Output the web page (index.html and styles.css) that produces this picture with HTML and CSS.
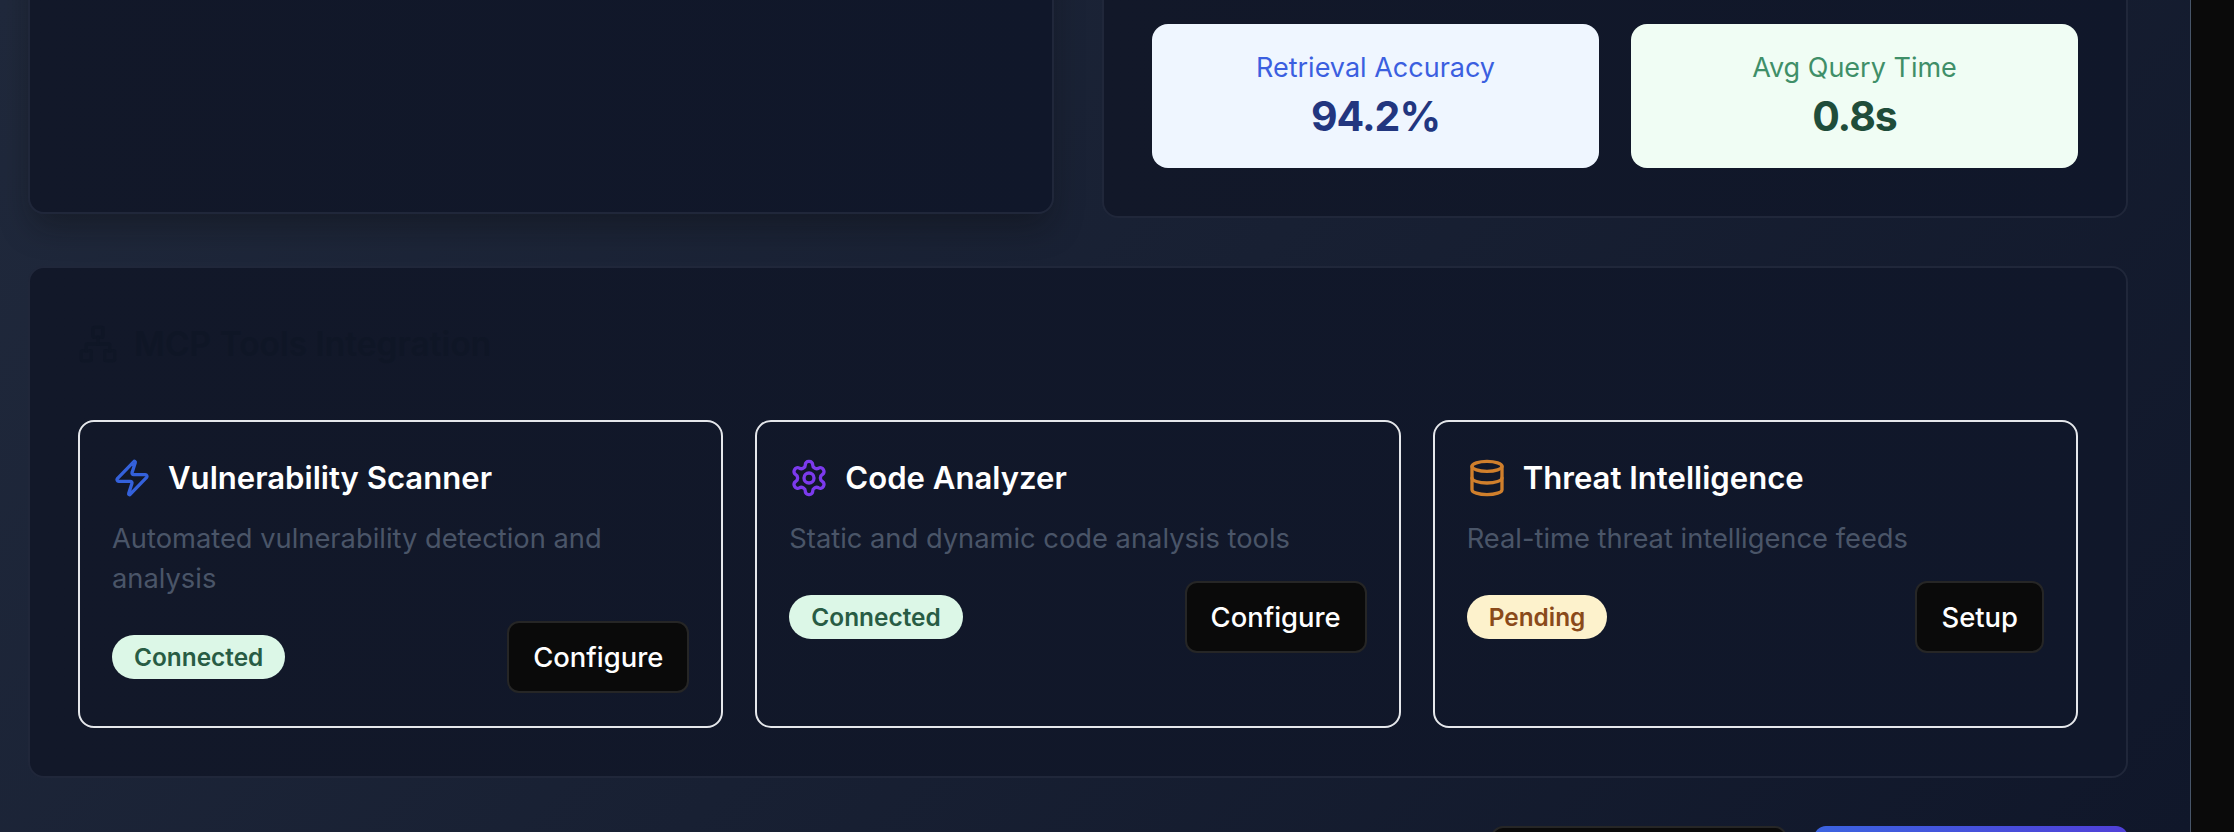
FILE: index.html
```html
<!DOCTYPE html>
<html lang="en">
<head>
<meta charset="utf-8">
<title>MCP Tools Integration</title>
<link rel="stylesheet" href="styles.css">
</head>
<body>
<div class="app">
  <main class="main">
    <div class="top-row">
      <section class="panel panel-left"></section>
      <section class="panel panel-right">
        <div class="metrics">
          <div class="metric metric-blue">
            <div class="metric-label">Retrieval Accuracy</div>
            <div class="metric-value">94.2%</div>
          </div>
          <div class="metric metric-green">
            <div class="metric-label">Avg Query Time</div>
            <div class="metric-value">0.8s</div>
          </div>
        </div>
      </section>
    </div>

    <section class="panel panel-tools">
      <h2 class="section-title">
        <svg class="icon" viewBox="0 0 24 24"><rect x="16" y="16" width="6" height="6" rx="1"/><rect x="2" y="16" width="6" height="6" rx="1"/><rect x="9" y="2" width="6" height="6" rx="1"/><path d="M5 16v-3a1 1 0 0 1 1-1h12a1 1 0 0 1 1 1v3"/><path d="M12 12V8"/></svg>
        MCP Tools Integration
      </h2>
      <div class="tools">
        <article class="tool">
          <div class="tool-head">
            <svg class="icon icon-blue" viewBox="0 0 24 24"><path d="M4 14a1 1 0 0 1-.78-1.63l9.9-10.2a.5.5 0 0 1 .86.46l-1.92 6.02A1 1 0 0 0 13 10h7a1 1 0 0 1 .78 1.63l-9.9 10.2a.5.5 0 0 1-.86-.46l1.92-6.02A1 1 0 0 0 11 14z"/></svg>
            <h3 class="tool-name">Vulnerability Scanner</h3>
          </div>
          <p class="tool-desc">Automated vulnerability detection and analysis</p>
          <div class="tool-foot">
            <span class="pill pill-green">Connected</span>
            <button class="btn">Configure</button>
          </div>
        </article>
        <article class="tool">
          <div class="tool-head">
            <svg class="icon icon-purple" viewBox="0 0 24 24"><path d="M12.22 2h-.44a2 2 0 0 0-2 2v.18a2 2 0 0 1-1 1.73l-.43.25a2 2 0 0 1-2 0l-.15-.08a2 2 0 0 0-2.73.73l-.22.38a2 2 0 0 0 .73 2.73l.15.1a2 2 0 0 1 1 1.72v.51a2 2 0 0 1-1 1.74l-.15.09a2 2 0 0 0-.73 2.73l.22.38a2 2 0 0 0 2.73.73l.15-.08a2 2 0 0 1 2 0l.43.25a2 2 0 0 1 1 1.73V20a2 2 0 0 0 2 2h.44a2 2 0 0 0 2-2v-.18a2 2 0 0 1 1-1.73l.43-.25a2 2 0 0 1 2 0l.15.08a2 2 0 0 0 2.73-.73l.22-.39a2 2 0 0 0-.73-2.73l-.15-.08a2 2 0 0 1-1-1.74v-.5a2 2 0 0 1 1-1.74l.15-.09a2 2 0 0 0 .73-2.73l-.22-.38a2 2 0 0 0-2.73-.73l-.15.08a2 2 0 0 1-2 0l-.43-.25a2 2 0 0 1-1-1.73V4a2 2 0 0 0-2-2z"/><circle cx="12" cy="12" r="3"/></svg>
            <h3 class="tool-name">Code Analyzer</h3>
          </div>
          <p class="tool-desc">Static and dynamic code analysis tools</p>
          <div class="tool-foot">
            <span class="pill pill-green">Connected</span>
            <button class="btn">Configure</button>
          </div>
        </article>
        <article class="tool">
          <div class="tool-head">
            <svg class="icon icon-orange" viewBox="0 0 24 24"><ellipse cx="12" cy="5" rx="9" ry="3"/><path d="M3 5v14a9 3 0 0 0 18 0V5"/><path d="M3 12a9 3 0 0 0 18 0"/></svg>
            <h3 class="tool-name">Threat Intelligence</h3>
          </div>
          <p class="tool-desc">Real-time threat intelligence feeds</p>
          <div class="tool-foot">
            <span class="pill pill-amber">Pending</span>
            <button class="btn">Setup</button>
          </div>
        </article>
      </div>
    </section>

    <div class="actions">
      <button class="action action-dark" aria-label="Secondary action"></button>
      <button class="action action-primary" aria-label="Primary action"></button>
    </div>
  </main>
</div>
</body>
</html>
```

FILE: styles.css
```css
* { box-sizing: border-box; }

html, body {
  margin: 0;
  height: 832px;
  overflow: hidden;
  background: #0a0a0a;
  font-family: Inter, "Liberation Sans", sans-serif;
}

.app {
  display: flex;
  height: 832px;
  overflow: hidden;
}

.main {
  flex: 0 0 2191px;
  height: 832px;
  padding: 0 62px 0 28px;
  border-right: 1px solid #475569;
  background: linear-gradient(135deg, #20293c 0%, #10172a 100%);
  display: flex;
  flex-direction: column;
  gap: 48px;
}

.top-row {
  margin-top: -60px;
  display: grid;
  grid-template-columns: 1fr 1fr;
  column-gap: 48px;
  align-items: start;
}

.panel {
  border: 2px solid #20273a;
  border-radius: 16px;
  background: linear-gradient(90deg, #121829 0%, #10172a 100%);
}

.panel-left {
  height: 274px;
  box-shadow: 0 16px 32px -4px rgba(12, 10, 10, 0.36);
}

.panel-right {
  padding: 82px 48px 48px;
}

.metrics {
  display: grid;
  grid-template-columns: 1fr 1fr;
  column-gap: 32px;
}

.metric {
  height: 144px;
  padding: 24px;
  border-radius: 16px;
  text-align: center;
}

.metric-label {
  font-size: 27px;
  line-height: 40px;
}

.metric-value {
  font-size: 41px;
  font-weight: 700;
  line-height: 56px;
  letter-spacing: -1px;
}

.metric-blue { background: #eff6ff; }
.metric-blue .metric-label { color: #3b5fe0; }
.metric-blue .metric-value { color: #22367f; }

.metric-green { background: #f0fdf4; }
.metric-green .metric-label { color: #3f8f68; }
.metric-green .metric-value { color: #1f4d3a; }

.panel-tools {
  padding: 48px;
}

.section-title {
  margin: 0 0 48px;
  height: 56px;
  display: flex;
  align-items: center;
  gap: 16px;
  font-size: 33.5px;
  font-weight: 600;
  color: #0f1626;
}

.icon {
  flex: none;
  width: 40px;
  height: 40px;
  fill: none;
  stroke: currentColor;
  stroke-width: 2;
  stroke-linecap: round;
  stroke-linejoin: round;
}

.icon-blue { color: #3461db; }
.icon-purple { color: #7c3aed; }
.icon-orange { color: #d07f2c; }

.tools {
  display: grid;
  grid-template-columns: repeat(3, 1fr);
  column-gap: 32px;
}

.tool {
  padding: 32px 32px 33px;
  border: 2px solid #e5e7eb;
  border-radius: 16px;
}

.tool-head {
  display: flex;
  align-items: center;
  gap: 16px;
  height: 48px;
  margin-bottom: 17px;
}

.tool-name {
  margin: 0;
  font-size: 31.1px;
  font-weight: 600;
  line-height: 48px;
  color: #ffffff;
}

.tool-desc {
  margin: 0 0 22px;
  font-size: 27.3px;
  line-height: 40px;
  color: #4a5568;
}

.tool-foot {
  display: flex;
  align-items: center;
  justify-content: space-between;
}

.pill {
  padding: 0 22px;
  height: 44px;
  display: flex;
  align-items: center;
  border-radius: 22px;
  font-size: 24.4px;
  font-weight: 600;
}

.pill-green { background: #dcf7e7; color: #285c44; }
.pill-amber { background: #fdf2cc; color: #8a4a1a; }

.btn {
  height: 72px;
  padding: 0 24px;
  border: 2px solid #262626;
  border-radius: 12px;
  background: #0a0a0a;
  color: #ffffff;
  font-family: inherit;
  font-size: 27.4px;
  font-weight: 500;
}

.actions {
  display: flex;
  justify-content: flex-end;
  gap: 27px;
  flex: none;
}

.action {
  height: 72px;
  border-radius: 12px;
  flex: none;
}

.action-dark {
  width: 296px;
  border: 2px solid #262626;
  background: #0a0a0a;
}

.action-primary {
  width: 314px;
  border: 0;
  background: linear-gradient(90deg, #3b63e0 0%, #5040d8 100%);
}
```
